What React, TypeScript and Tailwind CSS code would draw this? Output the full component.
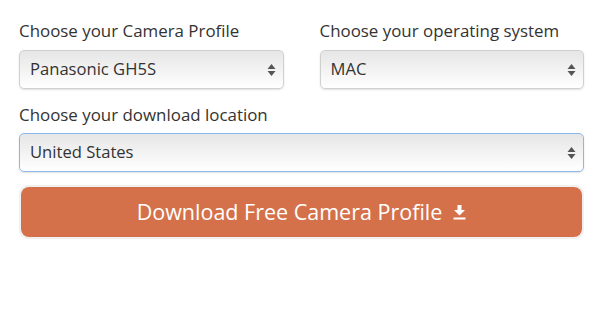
import React from 'react';

const font = { fontFamily: '"Open Sans", "Liberation Sans", sans-serif' };

function Arrows() {
  return (
    <svg width="9" height="14" viewBox="0 0 9 14" className="shrink-0">
      <path d="M4.5 1 L8.5 6 L0.5 6 Z" fill="#555" />
      <path d="M0.5 8 L8.5 8 L4.5 13 Z" fill="#555" />
    </svg>
  );
}

function FakeSelect({ value, focused = false }: { value: string; focused?: boolean }) {
  return (
    <div
      className={`flex h-[39px] items-center justify-between rounded-[5px] border bg-gradient-to-b from-[#e6e6e6] to-white pl-[10px] pr-[7px] text-[16.6px] text-[#333] shadow-[0_1px_2px_rgba(0,0,0,0.12)] ${
        focused ? 'border-[#8ab8ea]' : 'border-[#d0d0d0]'
      }`}
    >
      <span>{value}</span>
      <Arrows />
    </div>
  );
}

export default function App() {
  return (
    <div className="h-[311px] w-[600px] bg-white pl-[19px] pr-[16px] pt-[19px]" style={font}>
      {/* Top row */}
      <div className="grid grid-cols-2 gap-x-[36px]">
        <div>
          <div className="mb-[7px] text-[16.9px] leading-[24px] text-[#333]">Choose your Camera Profile</div>
          <FakeSelect value="Panasonic GH5S" />
        </div>
        <div>
          <div className="mb-[7px] text-[16.9px] leading-[24px] text-[#333]">Choose your operating system</div>
          <FakeSelect value="MAC" />
        </div>
      </div>

      {/* Location */}
      <div className="mt-[14px]">
        <div className="mb-[6px] text-[16.9px] leading-[24px] text-[#333]">Choose your download location</div>
        <FakeSelect value="United States" focused />
      </div>

      {/* Download button */}
      <div className="mt-[13px] rounded-[9px] border-2 border-[#f0f0f0]">
        <button className="flex h-[50px] w-full items-center justify-center gap-[11px] rounded-[8px] bg-[#d4714a] text-[21.5px] text-white">
          <span>Download Free Camera Profile</span>
          <svg width="13" height="15" viewBox="0 0 13 15">
            <path d="M4.5 0 H8.5 V5 H12 L6.5 10.5 L1 5 H4.5 Z" fill="white" />
            <rect x="0.5" y="12.5" width="12" height="2" fill="white" />
          </svg>
        </button>
      </div>
    </div>
  );
}
